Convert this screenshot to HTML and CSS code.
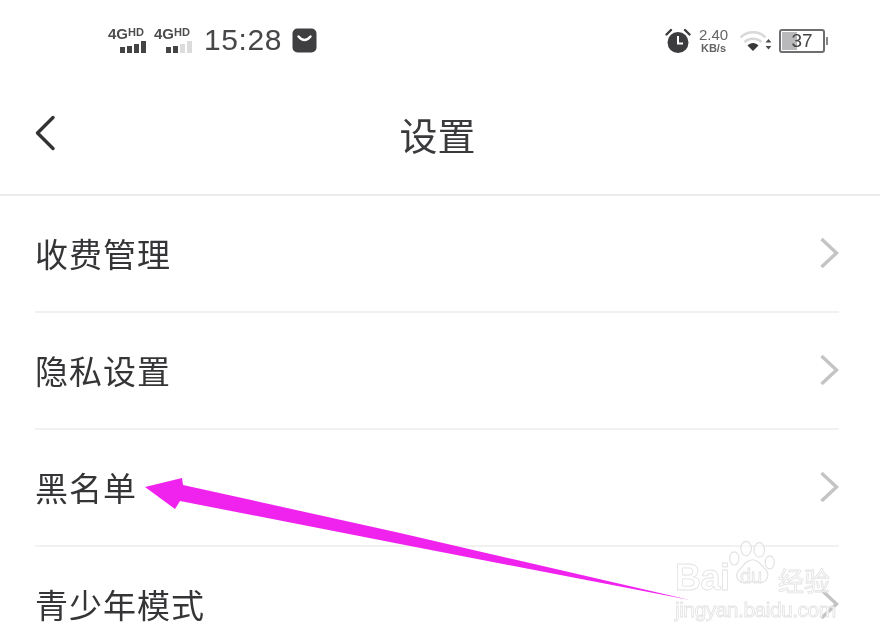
FILE: index.html
```html
<!DOCTYPE html>
<html lang="zh">
<head>
<meta charset="utf-8">
<title>设置</title>
<link rel="stylesheet" href="styles.css">
</head>
<body>
<div class="screen">
  <div class="status">
    <div class="status-left">
      <div class="sim">
        <div class="sim-label">4G<sup>HD</sup></div>
        <div class="bars"><i class="b1"></i><i class="b2"></i><i class="b3"></i><i class="b4"></i></div>
      </div>
      <div class="sim">
        <div class="sim-label">4G<sup>HD</sup></div>
        <div class="bars"><i class="b1"></i><i class="b2"></i><i class="b3 off"></i><i class="b4 off"></i></div>
      </div>
      <span class="time">15:28</span>
      <svg class="bag" width="25" height="25" viewBox="0 0 25 25"><rect x="0.5" y="0.5" width="24" height="24" rx="5" fill="#3f3f42"/><path d="M6.5 8.5q6 7 12 0" fill="none" stroke="#fff" stroke-width="2.4" stroke-linecap="round"/></svg>
    </div>
    <div class="status-right">
      <svg class="alarm" width="26" height="26" viewBox="0 0 26 26"><circle cx="13" cy="14.500" r="10.500" fill="#3c3c3f"/><path d="M13 8v7.500h5" fill="none" stroke="#fff" stroke-width="2"/><path d="M1.500 6.500 6 2M24.500 6.500 20 2" stroke="#3c3c3f" stroke-width="2.400" stroke-linecap="round"/></svg>
      <div class="speed"><span class="speed-num">2.40</span><span class="speed-unit">KB/s</span></div>
      <svg class="wifi" width="32" height="26" viewBox="0 0 32 26"><path d="M1.500 9.500C8 2.500 20 2.500 26.500 9.500" fill="none" stroke="#d8d8d8" stroke-width="2.500"/><path d="M5.500 14C10 9.500 18 9.500 22.500 14" fill="none" stroke="#d8d8d8" stroke-width="2.500"/><path d="M8.500 17.500C11.500 14 16.500 14 19.500 17.500L14 23Z" fill="#38383a"/><path d="M26.500 14.500h6l-3-3.500zM26.500 18h6l-3 3.500z" fill="#4a4a4a"/></svg>
      <div class="battery">
        <div class="battery-body"><span class="battery-fill"></span><span class="battery-num">37</span></div>
        <span class="battery-tip"></span>
      </div>
    </div>
  </div>

  <header class="nav">
    <svg class="back" width="24" height="36" viewBox="0 0 24 36"><path d="M20 2.500 4.500 18 20 33.500" fill="none" stroke="#333" stroke-width="3.400" stroke-linecap="round" stroke-linejoin="round"/></svg>
    <h1 class="title">设置</h1>
  </header>

  <ul class="list">
    <li class="row"><span class="label">收费管理</span><svg class="chev" width="20" height="32" viewBox="0 0 20 32"><path d="M2.500 2 17.500 16 2.500 30" fill="none" stroke="#c4c4c4" stroke-width="3.400"/></svg></li>
    <li class="row"><span class="label">隐私设置</span><svg class="chev" width="20" height="32" viewBox="0 0 20 32"><path d="M2.500 2 17.500 16 2.500 30" fill="none" stroke="#c4c4c4" stroke-width="3.400"/></svg></li>
    <li class="row"><span class="label">黑名单</span><svg class="chev" width="20" height="32" viewBox="0 0 20 32"><path d="M2.500 2 17.500 16 2.500 30" fill="none" stroke="#c4c4c4" stroke-width="3.400"/></svg></li>
    <li class="row"><span class="label">青少年模式</span><svg class="chev" width="20" height="32" viewBox="0 0 20 32"><path d="M2.500 2 17.500 16 2.500 30" fill="none" stroke="#c4c4c4" stroke-width="3.400"/></svg></li>
  </ul>

  <svg class="arrow" width="880" height="634" viewBox="0 0 880 634"><path d="M145 487 182 478 183 485 400 533 690 600 400 544 180 501 175 509Z" fill="#f022ee"/></svg>

  <div class="mark">
    <svg class="paw" width="46" height="52" viewBox="0 0 70 72"><g fill="#fff" fill-opacity=".6" stroke="#e2e2e2" stroke-width="1.800"><ellipse cx="8" cy="26" rx="7" ry="10"/><ellipse cx="26" cy="11" rx="8" ry="11"/><ellipse cx="46" cy="13" rx="8" ry="11"/><ellipse cx="62" cy="32" rx="7" ry="10"/><path d="M36 28c10 0 14 10 20 15 6 6 3 19-8 20-5 0-8-2-12-2s-8 3-14 2C12 62 8 50 16 43c6-5 9-15 20-15Z"/></g></svg>
    <span class="mark-baidu">Bai</span><span class="mark-du">du</span><span class="mark-cn">经验</span>
    <span class="mark-url">jingyan.baidu.com</span>
  </div>
</div>
</body>
</html>
```
FILE: styles.css
```css
* { box-sizing: border-box; }
html, body { margin: 0; padding: 0; background: #fff; }
body { font-family: "Noto Sans CJK SC", "Noto Sans", sans-serif; color: #333; }
.screen { position: relative; width: 880px; height: 634px; overflow: hidden; background: #fff; filter: blur(0.5px); }

.status { height: 80px; display: flex; justify-content: space-between; align-items: flex-start; padding: 26px 52px 0 108px; }
.status-left { display: flex; align-items: center; gap: 7px; height: 28px; }
.sim { width: 39px; display: flex; flex-direction: column; align-items: flex-end; }
.sim-label { font: bold 15px/13px "Liberation Sans", sans-serif; color: #4d4d4f; white-space: nowrap; width: 39px; }
.sim-label sup { font-size: 11px; line-height: 9px; vertical-align: 3px; font-weight: 700; }
.bars { display: flex; align-items: flex-end; gap: 2px; height: 13px; padding-right: 1px; }
.bars i { display: block; width: 5px; background: #444; }
.b1 { height: 6px; } .b2 { height: 7px; } .b3 { height: 9px; } .b4 { height: 12px; }
.bars .off { background: #dcdcdc; }
.time { font: 30px/28px "Liberation Sans", sans-serif; color: #47474a; letter-spacing: 0.6px; margin: 0 3px 0 4px; }
.status-right { display: flex; align-items: center; height: 30px; }
.speed { display: flex; flex-direction: column; align-items: center; margin: 0 0 0 6px; width: 33px; color: #636366; font-family: "Liberation Sans", sans-serif; font-weight: 700; }
.speed-num { font-size: 15px; line-height: 14px; font-weight: 400; }
.speed-unit { font-size: 11px; line-height: 12px; }
.wifi { margin-left: 9px; }
.battery { display: flex; align-items: center; margin-left: 8px; }
.battery-body { position: relative; width: 46px; height: 24px; border: 2px solid #6e6e70; border-radius: 3px; padding: 1px; display: flex; align-items: center; justify-content: center; }
.battery-fill { position: absolute; left: 1px; top: 1px; bottom: 1px; width: 15px; background: #b9b9bb; }
.battery-num { position: relative; font: 19px/20px "Liberation Sans", sans-serif; color: #444; }
.battery-tip { width: 2px; height: 8px; margin-left: 1px; background: #888; }

.nav { height: 116px; border-bottom: 2px solid #ececec; display: flex; align-items: center; justify-content: center; position: relative; padding-bottom: 6px; }
.back { position: absolute; left: 33px; top: 35px; }
.title { margin: 0 0 0 -5px; font-size: 38px; line-height: 48px; font-weight: 400; color: #3a3a3c; }

.list { margin: 0; padding: 0 41px 0 35px; list-style: none; }
.row { height: 117px; border-bottom: 2px solid #f1f1f1; display: flex; align-items: center; justify-content: space-between; padding: 0 0 2px; }
.label { font-size: 33px; line-height: 44px; color: #353537; letter-spacing: 1px; }
.chev { flex: none; margin-top: 1px; }

.arrow { position: absolute; left: 0; top: 0; pointer-events: none; }

.mark { position: absolute; left: 672px; top: 538px; width: 170px; height: 84px; }
.paw { position: absolute; left: 57px; top: 1px; }
.mark-baidu, .mark-du, .mark-cn, .mark-url { position: absolute; font-family: "Liberation Sans", sans-serif; color: rgba(255,255,255,.8); -webkit-text-stroke: 0.8px #e2e2e2; }
.mark-baidu { left: 3px; top: 20px; font-size: 36px; line-height: 40px; font-weight: 700; letter-spacing: -0.500px; }
.mark-du { left: 68px; top: 25px; font-size: 20px; line-height: 26px; }
.mark-cn { left: 106px; top: 27px; font-family: "Noto Sans CJK SC", sans-serif; font-size: 26px; line-height: 30px; }
.mark-url { left: 3px; top: 60px; font-size: 21px; line-height: 24px; letter-spacing: -0.500px; white-space: nowrap; }
```
